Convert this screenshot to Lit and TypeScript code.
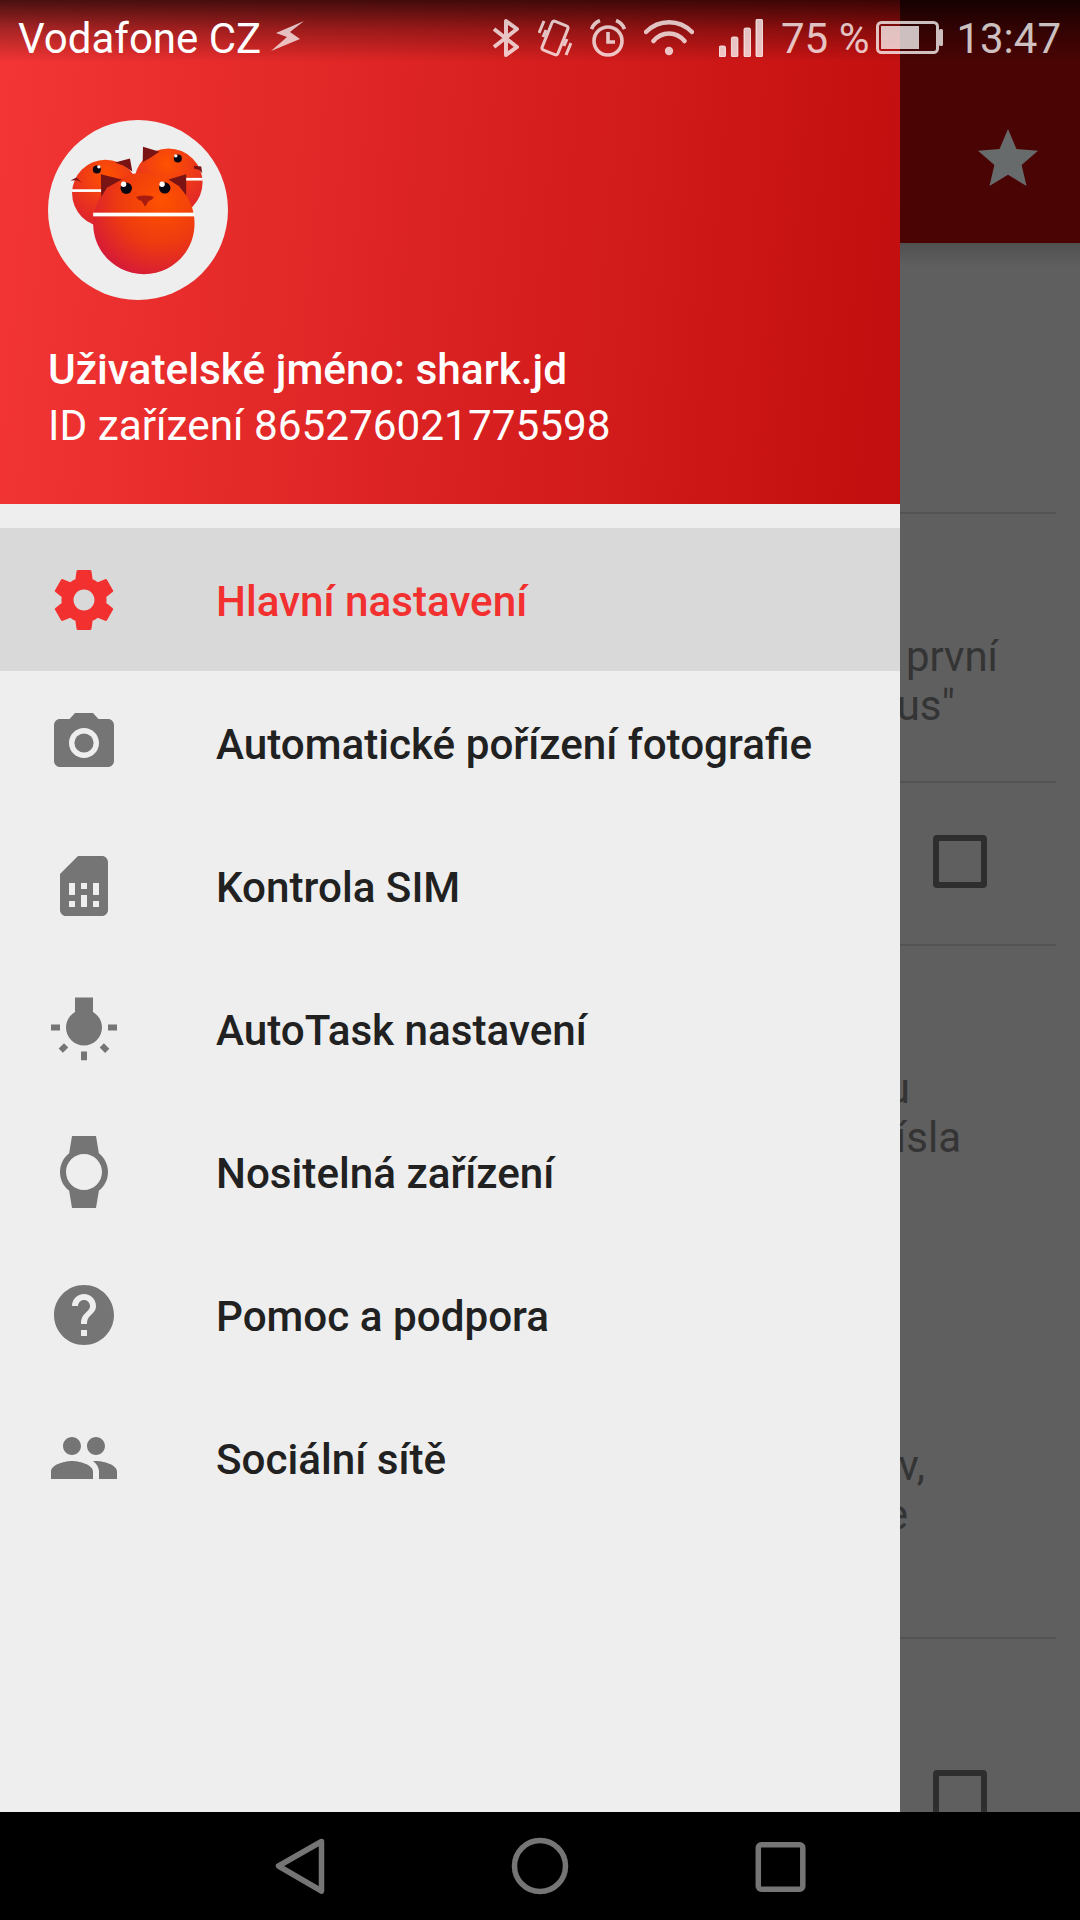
import { LitElement, html, css, svg } from "lit";
import { customElement } from "lit/decorators.js";

const P = (d: string) => svg`<path d=${d}></path>`;

const MENU = [
  { label: "Hlavní nastavení", active: true, icon: P("M19.43 12.98c.04-.32.07-.64.07-.98s-.03-.66-.07-.98l2.11-1.65c.19-.15.24-.42.12-.64l-2-3.46c-.12-.22-.39-.3-.61-.22l-2.49 1c-.52-.4-1.08-.73-1.69-.98l-.38-2.65C14.46 2.18 14.25 2 14 2h-4c-.25 0-.46.18-.49.42l-.38 2.65c-.61.25-1.17.59-1.69.98l-2.49-1c-.23-.09-.49 0-.61.22l-2 3.46c-.13.22-.07.49.12.64l2.11 1.65c-.04.32-.07.65-.07.98s.03.66.07.98l-2.11 1.65c-.19.15-.24.42-.12.64l2 3.46c.12.22.39.3.61.22l2.49-1c.52.4 1.08.73 1.69.98l.38 2.65c.03.24.24.42.49.42h4c.25 0 .46-.18.49-.42l.38-2.65c.61-.25 1.17-.59 1.69-.98l2.49 1c.23.09.49 0 .61-.22l2-3.46c.12-.22.07-.49-.12-.64l-2.11-1.65zM12 15.5c-1.93 0-3.5-1.57-3.5-3.5s1.57-3.5 3.5-3.5 3.5 1.57 3.5 3.5-1.57 3.5-3.5 3.5z") },
  { label: "Automatické pořízení fotografie", active: false, icon: svg`<circle cx="12" cy="12" r="3.2"></circle>${P("M9 2L7.17 4H4c-1.1 0-2 .9-2 2v12c0 1.1.9 2 2 2h16c1.1 0 2-.9 2-2V6c0-1.1-.9-2-2-2h-3.17L15 2H9zm3 15c-2.76 0-5-2.24-5-5s2.24-5 5-5 5 2.24 5 5-2.24 5-5 5z")}` },
  { label: "Kontrola SIM", active: false, icon: P("M19.99 4c0-1.1-.89-2-1.99-2h-8L4 8v12c0 1.1.9 2 2 2h12c1.1 0 2-.9 2-2l-.01-16zM9 19H7v-2h2v2zm8 0h-2v-2h2v2zm-8-4H7v-4h2v4zm4 4h-2v-4h2v4zm0-6h-2v-2h2v2zm4 2h-2v-4h2v4z") },
  { label: "AutoTask nastavení", active: false, icon: P("M3.55 18.54l1.41 1.41 1.79-1.8-1.41-1.41-1.79 1.8zM11 22.45h2V19.5h-2v2.95zM4 10.5H1v2h3v-2zm11-4.19V1.5H9v4.81C7.21 7.35 6 9.28 6 11.5c0 3.31 2.69 6 6 6s6-2.69 6-6c0-2.22-1.21-4.15-3-5.19zm5 4.19v2h3v-2h-3zm-2.76 7.66l1.79 1.8 1.41-1.41-1.8-1.79-1.4 1.4z") },
  { label: "Nositelná zařízení", active: false, icon: P("M20 12c0-2.54-1.19-4.81-3.04-6.27L16 0H8l-.95 5.73C5.19 7.19 4 9.45 4 12s1.19 4.81 3.05 6.27L8 24h8l.96-5.73C18.81 16.81 20 14.54 20 12zM6 12c0-3.31 2.69-6 6-6s6 2.69 6 6-2.69 6-6 6-6-2.69-6-6z") },
  { label: "Pomoc a podpora", active: false, icon: P("M12 2C6.48 2 2 6.48 2 12s4.48 10 10 10 10-4.48 10-10S17.52 2 12 2zm1 17h-2v-2h2v2zm2.07-7.75l-.9.92C13.45 12.9 13 13.5 13 15h-2v-.5c0-1.1.45-2.1 1.17-2.83l1.24-1.26c.37-.36.59-.86.59-1.41 0-1.1-.9-2-2-2s-2 .9-2 2H8c0-2.21 1.79-4 4-4s4 1.79 4 4c0 .88-.36 1.68-.93 2.25z") },
  { label: "Sociální sítě", active: false, icon: P("M16 11c1.66 0 2.99-1.34 2.99-3S17.66 5 16 5c-1.66 0-3 1.34-3 3s1.34 3 3 3zm-8 0c1.66 0 2.99-1.34 2.99-3S9.66 5 8 5C6.34 5 5 6.34 5 8s1.34 3 3 3zm0 2c-2.33 0-7 1.17-7 3.5V19h14v-2.5c0-2.33-4.67-3.5-7-3.5zm8 0c-.29 0-.62.02-.97.05 1.16.84 1.97 1.97 1.97 3.45V19h6v-2.5c0-2.33-4.67-3.5-7-3.5z") },
];

@customElement("app-root")
export class AppRoot extends LitElement {
  static styles = css`
    :host { display: block; width: 1080px; height: 1920px; position: relative; overflow: hidden; font-family: Roboto, "Liberation Sans", sans-serif; background: #5f5f5f; }
    .page { height: 100%; display: flex; flex-direction: column; }
    .appbar { height: 243px; flex: none; background: #4a0404; display: flex; justify-content: flex-end; align-items: flex-start; padding: 123px 36px 0 0; box-sizing: border-box; }
    .star { width: 72px; height: 72px; fill: #686b6b; }
    .list { flex: 1; min-height: 0; overflow: hidden; background: linear-gradient(#505050, #5f5f5f 24px); display: flex; flex-direction: column; padding-right: 24px; }
    .row { flex: none; box-sizing: border-box; border-bottom: 2px solid #545454; display: flex; flex-direction: column; }
    .r1 { height: 271px; }
    .r2 { height: 269px; padding-top: 118px; }
    .r3 { height: 163px; padding: 52px 69px 0 0; align-items: flex-end; }
    .r4 { height: 693px; padding-top: 118px; }
    .r5 { padding: 131px 69px 0 0; align-items: flex-end; border-bottom: 0; }
    .gap { height: 279px; flex: none; }
    .line { font-size: 42px; line-height: 49px; color: #343434; text-align: right; white-space: nowrap; }
    .box { width: 54px; height: 53px; box-sizing: border-box; border: 6px solid #2e2e2e; border-radius: 4px; flex: none; }
    .nav { height: 108px; flex: none; background: #000; display: flex; justify-content: center; align-items: center; position: relative; z-index: 3; }
    .nav svg { width: 240px; height: 64px; fill: none; stroke: #757575; stroke-width: 5.5; stroke-linejoin: round; }

    .drawer { position: absolute; left: 0; top: 0; bottom: 108px; width: 900px; background: #eee; z-index: 1; }
    .header { height: 504px; box-sizing: border-box; padding: 120px 0 0 48px; background: linear-gradient(95deg, #f33535, #c20e0e); color: #fff; }
    .avatar { width: 180px; height: 180px; display: block; margin-bottom: 42px; }
    .user { font-size: 42.4px; line-height: 56px; font-weight: 500; }
    .devid { font-size: 42.3px; line-height: 56px; font-weight: 400; }
    .menu { padding-top: 24px; }
    .item { height: 143px; display: flex; align-items: center; font-size: 42.2px; font-weight: 500; color: #212121; }
    .item.active { background: #d9d9d9; color: #f33030; }
    .item svg { width: 72px; height: 72px; margin: 0 96px 0 48px; fill: #757575; flex: none; }
    .item.active svg { fill: #f33030; }
    .item span { padding-top: 3px; }

    .status { position: absolute; left: 0; right: 0; top: 0; height: 72px; box-sizing: border-box; z-index: 2; display: flex; align-items: center; padding: 6px 19px 0 18px; background: linear-gradient(rgba(0,0,0,.7), rgba(0,0,0,.3) 30px, rgba(0,0,0,0) 62px); }
    .carrier { font-size: 42px; color: #fff; line-height: 72px; }
    .bolt { width: 34px; height: 30px; margin-left: 10px; fill: rgba(255,255,255,.72); margin-top: -6px; filter: blur(.6px); }
    .icons { margin-left: auto; display: flex; align-items: center; gap: 18px; color: rgba(255,255,255,.75); margin-top: -3px; }
    .icons svg { display: block; fill: none; stroke: currentColor; flex: none; }
    .pct { font-size: 42px; line-height: 72px; margin-top: 3px; }
    .sig { margin-left: 7px; }
    .bat { margin-left: -11px; }
    .time { font-size: 42px; line-height: 72px; margin-left: -5px; margin-top: 3px; }
  `;

  private logo() {
    return svg`<svg class="avatar" viewBox="55 60 538 538">
      <defs>
        <radialGradient id="b1" gradientUnits="userSpaceOnUse" cx="395" cy="300" r="240"><stop offset="0" stop-color="#ff5200"></stop><stop offset=".55" stop-color="#ee3a10"></stop><stop offset="1" stop-color="#d51a38"></stop></radialGradient>
        <radialGradient id="b2" gradientUnits="userSpaceOnUse" cx="230" cy="225" r="160"><stop offset="0" stop-color="#ff5200"></stop><stop offset="1" stop-color="#dc2030"></stop></radialGradient>
        <radialGradient id="b3" gradientUnits="userSpaceOnUse" cx="410" cy="190" r="170"><stop offset="0" stop-color="#ff5200"></stop><stop offset="1" stop-color="#dc2030"></stop></radialGradient>
      </defs>
      <circle cx="324" cy="329" r="269" fill="#eee"></circle>
      <circle cx="415" cy="247" r="102" fill="url(#b3)"></circle>
      <path d="M339 140L388 155L362 172L338 186Z" fill="#7a1414"></path>
      <circle cx="443" cy="175" r="12" fill="#0a0612"></circle><circle cx="437" cy="167" r="5" fill="#fff"></circle>
      <path d="M491 197L513 199L516 219L507 209L492 206Z" fill="#7a1414"></path>
      <rect x="464" y="233" width="53" height="8" fill="#fff"></rect>
      <circle cx="227" cy="279" r="100" fill="url(#b2)"></circle>
      <path d="M255 187L300 175L307 214L280 196Z" fill="#7a1414"></path>
      <circle cx="201" cy="208" r="12" fill="#0a0612"></circle><circle cx="207" cy="200" r="5" fill="#fff"></circle>
      <path d="M122 241L140 232L155 246L142 240Z" fill="#7a1414"></path>
      <rect x="127" y="267" width="90" height="8" fill="#fff"></rect>
      <path d="M190 369C190 285 258 218 342 218C426 218 493 285 493 369C493 453 426 521 342 521C258 521 190 453 190 369Z" fill="url(#b1)"></path>
      <path d="M213 222L276 238L232 262L214 290Z" fill="#7a1414"></path>
      <path d="M468 222L415 238L447 258L468 285Z" fill="#7a1414"></path>
      <circle cx="289" cy="264" r="17" fill="#0a0612"></circle><circle cx="281" cy="252" r="8" fill="#fff"></circle>
      <circle cx="404" cy="263" r="17" fill="#0a0612"></circle><circle cx="396" cy="252" r="8" fill="#fff"></circle>
      <path d="M318 290Q345 282 372 290Q365 300 356 302L345 319L335 302Q324 300 318 290Z" fill="#a81c10"></path>
      <rect x="190" y="337" width="303" height="11" fill="#fff"></rect>
    </svg>`;
  }

  private statusIcons() {
    return html`
      <svg width="28" height="38" viewBox="0 0 28 38" stroke-width="4" stroke-linejoin="round"><path d="M2 10L25 28L14 36V2L25 10L2 28"></path></svg>
      <svg width="34" height="38" viewBox="0 0 34 38" stroke-width="3"><rect x="8.5" y="3.5" width="17" height="31" rx="2.5" transform="rotate(22 17 19)"></rect><path d="M1 14L6 2M5 18L8 11M33 24L28 36M29 20L26 27"></path></svg>
      <svg width="36" height="38" viewBox="0 0 36 38" stroke-width="3.6"><circle cx="18" cy="22" r="14"></circle><path d="M18 13V23H25M1.5 10C3 6 6 3 10 1.5M34.5 10C33 6 30 3 26 1.5"></path></svg>
      <svg width="50" height="37" viewBox="0 0 50 37" stroke-width="4.5" stroke-linecap="round"><path d="M2 13C15 0 35 0 48 13M9.5 22C18 12 32 12 40.5 22"></path><circle cx="25" cy="32" r="4.2" fill="currentColor" stroke="none"></circle></svg>
      <svg class="sig" width="44" height="38" viewBox="0 0 44 38" stroke="none"><rect x="0" y="27" width="6.5" height="11" rx="1.5" fill="currentColor"></rect><rect x="12.4" y="18" width="6.5" height="20" rx="1.5" fill="currentColor"></rect><rect x="25" y="9" width="6.5" height="29" rx="1.5" fill="currentColor"></rect><rect x="37" y="0" width="6.5" height="38" rx="1.5" fill="currentColor"></rect></svg>
      <span class="pct">75 %</span>
      <svg class="bat" width="67" height="33" viewBox="0 0 67 33" stroke-width="3"><rect x="1.5" y="1.5" width="60" height="30" rx="4"></rect><rect x="5" y="5" width="38" height="23" fill="currentColor" stroke="none"></rect><rect x="63" y="8" width="4" height="17" rx="1.5" fill="currentColor" stroke="none"></rect></svg>
      <span class="time">13:47</span>`;
  }

  render() {
    return html`
      <div class="page">
        <div class="appbar"><svg class="star" viewBox="0 0 24 24"><path d="M12 17.27L18.18 21l-1.64-7.03L22 9.24l-7.19-.61L12 2 9.19 8.63 2 9.24l5.46 4.73L5.82 21z"></path></svg></div>
        <div class="list">
          <div class="row r1"></div>
          <div class="row r2">
            ${[["první", 58], ['us"', 101]].map(([t, r]) => html`<div class="line" style="padding-right:${r}px">${t}</div>`)}
          </div>
          <div class="row r3"><div class="box"></div></div>
          <div class="row r4">
            ${[["u", 146], ["ísla", 95]].map(([t, r]) => html`<div class="line" style="padding-right:${r}px">${t}</div>`)}
            <div class="gap"></div>
            ${[["v,", 131], ["e", 148]].map(([t, r]) => html`<div class="line" style="padding-right:${r}px">${t}</div>`)}
          </div>
          <div class="row r5"><div class="box"></div></div>
        </div>
        <div class="nav">
          <svg viewBox="0 0 240 64"><path d="M141.5 7.5L98.5 32L141.5 57Z"></path></svg>
          <svg viewBox="0 0 240 64"><circle cx="120" cy="32" r="25.5"></circle></svg>
          <svg viewBox="0 0 240 64"><rect x="98.3" y="10.8" width="44.5" height="44.5" rx="3"></rect></svg>
        </div>
      </div>

      <aside class="drawer">
        <div class="header">
          ${this.logo()}
          <div class="user">Uživatelské jméno: shark.jd</div>
          <div class="devid">ID zařízení 865276021775598</div>
        </div>
        <div class="menu">
          ${MENU.map(m => html`<div class="item ${m.active ? "active" : ""}"><svg viewBox="0 0 24 24">${m.icon}</svg><span>${m.label}</span></div>`)}
        </div>
      </aside>

      <div class="status">
        <span class="carrier">Vodafone CZ</span>
        <svg class="bolt" viewBox="0 0 34 30"><path d="M33 0L5 12L16 16L0 30L29 18L19 11Z"></path></svg>
        <div class="icons">${this.statusIcons()}</div>
      </div>
    `;
  }
}
